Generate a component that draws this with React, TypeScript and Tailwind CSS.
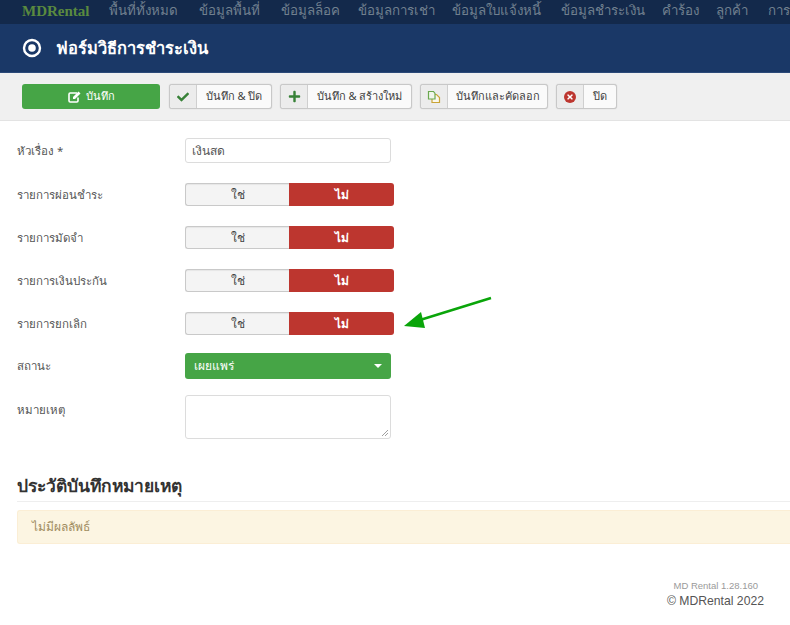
import React from "react";
import { FaCheck, FaPlus, FaTimes } from "react-icons/fa";

const font = "[font-family:'Noto_Sans','Liberation_Sans','Noto_Sans_CJK_SC',sans-serif]";

const menu: [string, string][] = [
  ["พื้นที่ทั้งหมด", "w-[90px]"],
  ["ข้อมูลพื้นที่", "w-[82px]"],
  ["ข้อมูลล็อค", "w-[77px]"],
  ["ข้อมูลการเช่า", "w-[94px]"],
  ["ข้อมูลใบแจ้งหนี้", "w-[109px]"],
  ["ข้อมูลชำระเงิน", "w-[101px]"],
  ["คำร้อง", "w-[54px]"],
  ["ลูกค้า", "w-[52px]"],
  ["การเงิน", "w-[60px]"],
];

function ToolButton({ icon, label, textW }: { icon: React.ReactNode; label: string; textW: string }) {
  return (
    <div className={`flex h-[25px] items-stretch rounded-[3px] border border-[#c8c8c8] bg-[#fafafa] shadow-[0_0_1px_#bbb] ${textW}`}>
      <div className="flex w-[27px] shrink-0 items-center justify-center rounded-l-[3px] border-r border-[#cfcfcf] bg-[#ececec]">{icon}</div>
      <div className="flex flex-1 items-center justify-center whitespace-nowrap text-[11px] text-[#3f3f3f]">{label}</div>
    </div>
  );
}

function Row({ label, children, h, mb, top }: { label: string; children: React.ReactNode; h: string; mb: string; top?: boolean }) {
  return (
    <div className={`flex ${top ? "items-start" : "items-center"} ${h} ${mb}`}>
      <div className={`w-[185px] shrink-0 pl-[17px] text-[11.5px] leading-[18px] text-[#555] ${top ? "pt-[6px]" : ""}`}>{label}</div>
      {children}
    </div>
  );
}

function Toggle() {
  return (
    <div className="flex h-[23px] w-[209px] text-[12px]">
      <div className="flex w-[104px] items-center justify-center rounded-l-[3px] border border-r-0 border-[#c9c9c9] bg-[#f4f4f4] font-medium text-[#444] shadow-[inset_0_1px_1px_rgba(0,0,0,0.06)]">ใช่</div>
      <div className="flex w-[105px] items-center justify-center rounded-r-[3px] bg-[#bd362f] font-semibold text-white">ไม่</div>
    </div>
  );
}

function CopyIcon() {
  return (
    <svg width="14" height="14" viewBox="0 0 14 14" fill="none" strokeWidth="1.2">
      <path d="M5 4.500h4.500l3 3v5H5z" stroke="#c9a437" fill="#fbf8ec" />
      <path d="M1.500 1.500h5l1.500 2v5.500H1.500z" stroke="#6aa84f" fill="#f1f6ec" />
    </svg>
  );
}

function EditIcon() {
  return (
    <svg width="13" height="12" viewBox="0 0 13 12" fill="none">
      <path d="M9 2H2.200C1.500 2 1 2.500 1 3.200v6.600C1 10.500 1.500 11 2.200 11h6.600c.7 0 1.200-.5 1.200-1.200V6.500" stroke="#fff" strokeWidth="1.600" />
      <path d="M5 6l5.500-5.500 2 2L7 8H5z" fill="#fff" />
    </svg>
  );
}

export default function App() {
  return (
    <div className={`relative h-[625px] w-[790px] overflow-hidden bg-white ${font}`}>
      <nav className="flex h-[24px] items-center overflow-hidden bg-[#13294b] pb-[2px] pl-[22px] whitespace-nowrap">
        <span className="w-[87px] shrink-0 font-['Liberation_Serif',serif] text-[15px] font-bold text-[#5a8a3f]">MDRental</span>
        {menu.map(([t, w]) => (
          <span key={t} className={`shrink-0 text-[13.300px] text-[#71808f] ${w}`}>{t}</span>
        ))}
      </nav>

      <header className="flex h-[49px] items-center border-b border-[#2c4a79] bg-[#1a3867] pl-[22px]">
        <svg width="20" height="20" viewBox="0 0 20 20" className="mr-[14px]">
          <circle cx="10" cy="10" r="8" fill="none" stroke="#fff" strokeWidth="2.400" />
          <circle cx="10" cy="10" r="3.800" fill="#fff" />
        </svg>
        <h1 className="text-[16.500px] font-semibold text-white">ฟอร์มวิธีการชำระเงิน</h1>
      </header>

      <div className="flex h-[48px] items-center gap-[8px] border-b border-[#e3e3e3] bg-[#f0f0f0] pl-[22px]">
        <div className="mr-[1px] flex h-[25px] w-[138px] items-center justify-center gap-[5px] rounded-[3px] bg-[#46a546] text-[11px] font-medium text-white">
          <EditIcon />
          <span>บันทึก</span>
        </div>
        <ToolButton textW="w-[103px]" label="บันทึก & ปิด" icon={<FaCheck className="text-[12px] text-[#378137]" />} />
        <ToolButton textW="w-[132px]" label="บันทึก & สร้างใหม่" icon={<FaPlus className="text-[13px] text-[#378137]" />} />
        <ToolButton textW="w-[128px]" label="บันทึกและคัดลอก" icon={<CopyIcon />} />
        <ToolButton textW="w-[61px]" label="ปิด" icon={
          <span className="flex h-[12px] w-[12px] items-center justify-center rounded-full bg-[#bd362f]"><FaTimes className="text-[8px] text-white" /></span>
        } />
      </div>

      <main className="pt-[17px]">
        <Row label="หัวเรื่อง *" h="h-[25px]" mb="mb-[20px]">
          <div className="flex h-[25px] w-[206px] items-center rounded-[3px] border border-[#dcdcdc] pl-[6px] text-[12px] text-[#555]">เงินสด</div>
        </Row>
        <Row label="รายการผ่อนชำระ" h="h-[23px]" mb="mb-[20px]"><Toggle /></Row>
        <Row label="รายการมัดจำ" h="h-[23px]" mb="mb-[20px]"><Toggle /></Row>
        <Row label="รายการเงินประกัน" h="h-[23px]" mb="mb-[20px]"><Toggle /></Row>
        <Row label="รายการยกเลิก" h="h-[23px]" mb="mb-[18px]"><Toggle /></Row>
        <Row label="สถานะ" h="h-[26px]" mb="mb-[16px]">
          <div className="flex h-[26px] w-[206px] items-center justify-between rounded-[3px] bg-[#46a546] pr-[9px] pl-[9px] text-[12px] font-medium text-white">
            <span>เผยแพร่</span>
            <span className="h-0 w-0 border-x-[4px] border-t-[4px] border-x-transparent border-t-white" />
          </div>
        </Row>
        <Row label="หมายเหตุ" h="h-[44px]" mb="mb-[34px]" top>
          <div className="relative h-[44px] w-[206px] rounded-[3px] border border-[#dcdcdc]">
            <svg width="8" height="8" viewBox="0 0 8 8" className="absolute right-[1px] bottom-[1px]">
              <path d="M1 7l6-6M4 7l3-3" stroke="#888" strokeWidth="0.800" />
            </svg>
          </div>
        </Row>

        <h2 className="ml-[17px] h-[29px] border-b border-[#eee] text-[17.400px] leading-[24px] font-semibold text-[#333]">ประวัติบันทึกหมายเหตุ</h2>
        <div className="mt-[8px] ml-[17px] flex h-[34px] items-center rounded-l-[3px] border border-r-0 border-[#fbeed5] bg-[#fcf5e2] pl-[14px] text-[12px] font-medium text-[#a08c60]">ไม่มีผลลัพธ์</div>

        <div className="mt-[35px] pr-[32px] text-right font-['Liberation_Sans',sans-serif] text-[9.500px] leading-[14px] text-[#9a9a9a]">MD Rental 1.28.160</div>
        <div className="pr-[26px] text-right font-['Liberation_Sans',sans-serif] text-[12.200px] leading-[16px] text-[#555]">© MDRental 2022</div>
      </main>

      <svg width="100" height="50" viewBox="0 0 100 50" className="absolute top-[292px] left-[400px]">
        <path d="M91 6L20 28" stroke="#0aa50a" strokeWidth="2.400" />
        <path d="M4 34l17-14 4 16z" fill="#0aa50a" />
      </svg>
    </div>
  );
}
